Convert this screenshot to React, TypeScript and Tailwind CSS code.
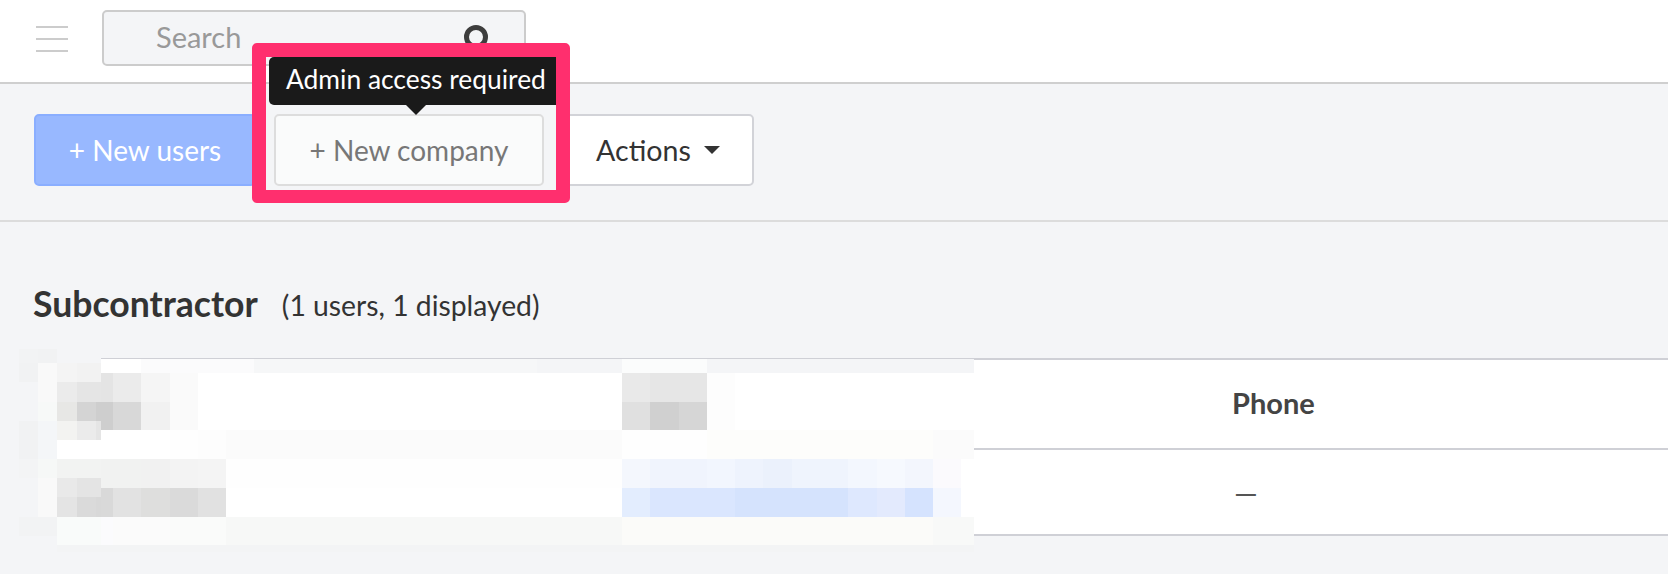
// App.tsx — users page with the "New company" button called out

// mosaic cells in 3x units: x, y, w, h, colour
type Cell = [number, number, number, number, string];

const mosaic: Cell[] = [
  // hides the table edge left of the blurred block
  [0, 0, 172, 702, "#f4f5f7"],
  [172, 0, 131, 70, "#f4f5f7"],
  // top band
  [303, 57, 121, 41, "#ffffff"],
  [424, 57, 338, 41, "#fbfbfc"],
  [762, 57, 848, 41, "#f6f7f8"],
  [1610, 57, 256, 41, "#f4f5f7"],
  [1866, 57, 255, 41, "#fbfcfc"],
  [2121, 57, 801, 41, "#f4f5f7"],
  // header row
  [303, 98, 2619, 173, "#ffffff"],
  [303, 98, 36, 87, "#e4e4e4"],
  [339, 98, 85, 87, "#ebebeb"],
  [424, 98, 86, 87, "#f5f5f5"],
  [510, 98, 84, 87, "#fafafa"],
  [288, 185, 51, 86, "#cecece"],
  [339, 185, 85, 86, "#d8d8d8"],
  [424, 185, 86, 86, "#f1f1f1"],
  [510, 185, 84, 86, "#fafafa"],
  [1866, 98, 84, 87, "#e9e9e9"],
  [1950, 98, 171, 87, "#e6e6e6"],
  [1866, 185, 84, 86, "#e0e0e0"],
  [1950, 185, 86, 86, "#d0d0d0"],
  [2036, 185, 85, 86, "#d6d6d6"],
  [2121, 98, 83, 173, "#fdfdfd"],
  // left edge, first block
  [58, 27, 57, 43, "#f2f3f4"],
  [115, 27, 57, 43, "#f1f2f3"],
  [58, 70, 57, 57, "#f1f2f3"],
  [115, 70, 57, 115, "#f9f9f9"],
  [172, 70, 58, 57, "#f4f4f4"],
  [230, 70, 73, 57, "#f2f2f2"],
  [172, 127, 58, 58, "#ebebeb"],
  [230, 127, 73, 58, "#e5e5e5"],
  [115, 185, 57, 58, "#f7f9f8"],
  [172, 185, 58, 58, "#e7e7e5"],
  [230, 185, 58, 58, "#d4d4d4"],
  [58, 243, 57, 114, "#f1f2f3"],
  [115, 243, 57, 114, "#f4f6f8"],
  // spacer band
  [172, 271, 338, 86, "#ffffff"],
  [172, 243, 58, 56, "#f3f3f1"],
  [230, 243, 58, 56, "#ebebeb"],
  [288, 243, 15, 56, "#e5e5e5"],
  [510, 271, 84, 86, "#fefefe"],
  [594, 271, 84, 86, "#fdfdfd"],
  [678, 271, 1188, 86, "#fbfbfb"],
  [1866, 271, 255, 86, "#fefefe"],
  [2121, 271, 679, 86, "#fdfdfb"],
  [2800, 271, 122, 86, "#fbfbfb"],
  // body row, upper half
  [172, 357, 131, 58, "#f2f3f2"],
  [303, 357, 121, 87, "#f1f2f1"],
  [424, 357, 86, 87, "#f1f1f1"],
  [510, 357, 84, 87, "#f3f3f3"],
  [594, 357, 84, 87, "#f4f4f4"],
  [678, 357, 1188, 87, "#fefefe"],
  [1866, 357, 84, 87, "#f4f7fd"],
  [1950, 357, 171, 87, "#f0f4fd"],
  [2121, 357, 84, 87, "#f2f6fe"],
  [2205, 357, 85, 87, "#eef3fd"],
  [2290, 357, 85, 87, "#ebf1fc"],
  [2375, 357, 170, 87, "#eff4fd"],
  [2545, 357, 85, 87, "#f3f7fe"],
  [2630, 357, 85, 87, "#f6f9fe"],
  [2715, 357, 85, 87, "#f3f6fd"],
  [2800, 357, 83, 87, "#fbfafd"],
  [2883, 357, 39, 173, "#ffffff"],
  // body row, lower half
  [303, 444, 36, 86, "#d9d9d9"],
  [339, 444, 85, 86, "#e2e2e2"],
  [424, 444, 86, 86, "#dededd"],
  [510, 444, 84, 86, "#dadada"],
  [594, 444, 84, 86, "#e1e1e1"],
  [678, 444, 1188, 86, "#ffffff"],
  [1866, 444, 84, 86, "#e3edfe"],
  [1950, 444, 255, 86, "#dae6fe"],
  [2205, 444, 340, 86, "#d5e3fd"],
  [2545, 444, 85, 86, "#dee8fe"],
  [2630, 444, 85, 86, "#e3eafd"],
  [2715, 444, 85, 86, "#d5e3fe"],
  [2800, 444, 83, 86, "#f4f7fe"],
  // left edge, second block
  [58, 357, 57, 58, "#f3f4f5"],
  [115, 357, 57, 58, "#f6f8f7"],
  [115, 415, 57, 115, "#f9f9f9"],
  [172, 415, 58, 57, "#e9e9e9"],
  [230, 415, 73, 57, "#e4e4e4"],
  [172, 472, 58, 58, "#e4e4e4"],
  [230, 472, 58, 58, "#dadada"],
  [288, 472, 15, 58, "#d8d8d8"],
  [58, 530, 114, 58, "#f2f3f4"],
  // bottom bands
  [172, 530, 131, 85, "#f9fbfa"],
  [303, 530, 37, 85, "#fbfbfd"],
  [340, 530, 170, 85, "#fbfbfb"],
  [510, 530, 168, 85, "#fafbfa"],
  [678, 530, 1188, 85, "#f7f8f7"],
  [1866, 530, 934, 85, "#fbfbf9"],
  [2800, 530, 122, 85, "#f8f9f8"],
  [172, 615, 2750, 22, "#f3f4f5"],
];

function Mosaic() {
  return (
    <svg
      className="absolute left-0 top-[340px] h-[234px] w-[974px]"
      viewBox="0 0 2922 702"
      shapeRendering="crispEdges"
    >
      {mosaic.map(([x, y, w, h, fill], i) => (
        <rect key={i} x={x} y={y} width={w} height={h} fill={fill} />
      ))}
    </svg>
  );
}

function Header() {
  return (
    <div className="flex h-[84px] shrink-0 items-start border-b-2 border-[#cfcfcf] bg-white">
      <div className="ml-[36px] mt-[26px] flex w-[32px] flex-col gap-[10px]">
        <div className="h-[2px] bg-[#cccccc]" />
        <div className="h-[2px] bg-[#cccccc]" />
        <div className="h-[2px] bg-[#cccccc]" />
      </div>
      <div className="ml-[34px] mt-[10px] flex h-[56px] w-[424px] items-start rounded-[5px] border-2 border-[#cccccc] bg-[#f4f5f7] pl-[52px]">
        <span className="mt-[7px] text-[29px] leading-[36px] text-[#999999]">Search</span>
        <svg className="ml-auto mr-[34px] mt-[12px]" width="26" height="34" viewBox="0 0 26 34" fill="none">
          <circle cx="12" cy="13" r="9.5" stroke="#3d3d3d" strokeWidth="5" />
          <path d="M19 20l6 8" stroke="#3d3d3d" strokeWidth="5" />
        </svg>
      </div>
    </div>
  );
}

function Toolbar() {
  return (
    <div className="flex h-[138px] shrink-0 items-start gap-[18px] border-b-2 border-[#dcdcdc] pl-[34px] pt-[30px]">
      <button className="h-[72px] w-[222px] rounded-[5px] border-2 border-[#8aaeff] bg-[#98b8ff] text-[28px] text-white">
        + New users
      </button>
      <button className="h-[72px] w-[270px] rounded-[5px] border-2 border-[#dddddd] bg-[#fafbfb] text-[28px] text-[#777777]">
        + New company
      </button>
      <button className="flex h-[72px] w-[192px] items-center justify-center gap-[13px] rounded-[5px] border-2 border-[#d2d3d8] bg-white text-[28.6px] text-[#333333]">
        Actions
        <span className="h-0 w-0 border-x-[8px] border-t-[8px] border-x-transparent border-t-[#333333]" />
      </button>
    </div>
  );
}

function UsersTable() {
  return (
    <div className="ml-[34px] mt-[31px] grid grid-cols-[1198px_1fr] border-y-2 border-[#cfd0d6] bg-white text-[#444444]">
      <div className="h-[90px] border-b-2 border-[#cfd0d6]" />
      <div className="flex h-[90px] items-center border-b-2 border-[#cfd0d6] pb-[3px] text-[29px] font-bold">Phone</div>
      <div className="h-[84px]" />
      <div className="flex h-[84px] items-center pl-[2px] text-[30px] text-[#555555]">—</div>
    </div>
  );
}

export default function App() {
  return (
    <div className="relative flex h-[574px] w-[1668px] flex-col overflow-hidden bg-[#f4f5f7] font-['Lato',sans-serif]">
      <Header />
      <Toolbar />

      <div className="ml-[33px] mt-[60px] flex items-start gap-[24px] text-[#333333]">
        <h2 className="text-[35.6px] font-bold leading-[44px]">Subcontractor</h2>
        <span className="mt-[1px] text-[28.3px] leading-[44px]">(1 users, 1 displayed)</span>
      </div>

      <UsersTable />
      <Mosaic />

      {/* annotation box, the tooltip is cut off by its edge */}
      <div className="absolute left-[252px] top-[43px] h-[160px] w-[318px] overflow-hidden rounded-[5px] border-x-[14px] border-b-[13px] border-t-[14px] border-[#ff2f6e]">
        <div className="absolute left-[3px] top-0 flex h-[48px] w-[320px] items-center rounded-[5px] bg-[#1a1a1a] pb-[3px] pl-[17px] text-[26.4px] text-white">
          Admin access required
        </div>
        <div className="absolute left-[139px] top-[47px] h-0 w-0 border-x-[11px] border-t-[11px] border-x-transparent border-t-[#1a1a1a]" />
      </div>
    </div>
  );
}
